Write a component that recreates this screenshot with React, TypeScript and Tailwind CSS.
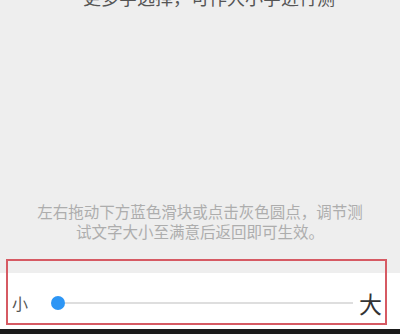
export default function App() {
  return (
    <div
      className="relative flex h-[334px] w-[400px] flex-col overflow-hidden bg-[#eeeeee]"
      style={{ fontFamily: '"Noto Sans CJK SC", "Noto Sans", sans-serif' }}
    >
      {/* preview text, scrolled mostly out of view */}
      <div className="flex flex-1 flex-col items-center justify-between bg-[#eeeeee] pb-[32px]">
        <p className="mt-[-12px] text-[18px] leading-[18px] text-[#555555]">
          ·更多字选择，可作大小字进行测
        </p>
        <p className="text-center text-[15.5px] leading-[20px] text-[#adadad]">
          左右拖动下方蓝色滑块或点击灰色圆点，调节测
          <br />
          试文字大小至满意后返回即可生效。
        </p>
      </div>

      {/* slider bar */}
      <div className="flex h-[56px] items-center bg-white pl-[12px] pr-[18px] pt-[4px]">
        <span className="w-[16px] text-[16px] leading-none text-[#555555]">小</span>
        <div className="relative ml-[23px] flex flex-1 items-center">
          <div className="z-10 h-[14px] w-[14px] shrink-0 rounded-full bg-[#2d96f5]" />
          <div className="h-[2px] flex-1 bg-[#dedede]" />
        </div>
        <span className="ml-[6px] text-[23px] leading-none text-[#333333]">大</span>
      </div>

      <div className="h-[5px] bg-[#1b1b1b]" />

      {/* annotation box */}
      <div className="absolute left-[6px] top-[259px] h-[66px] w-[381px] border-2 border-[#d65a63]" />
    </div>
  );
}
